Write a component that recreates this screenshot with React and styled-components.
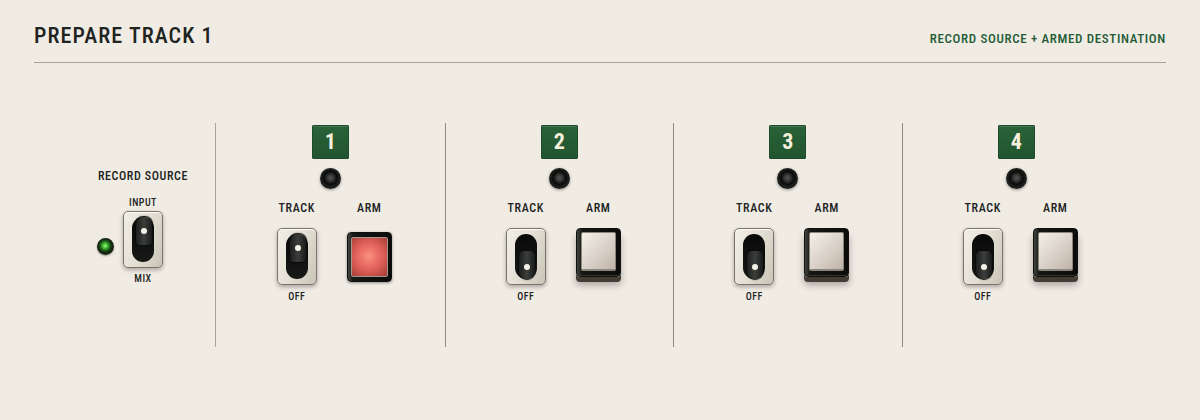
import React from "react";
import styled, { createGlobalStyle, css } from "styled-components";

const GlobalStyle = createGlobalStyle`
  * { box-sizing: border-box; }
  body {
    margin: 0;
    background: #f0ebe3;
    color: #20231f;
    font-family: "Roboto Condensed", "Liberation Sans Narrow", "Roboto", sans-serif;
    font-weight: 500;
  }
`;

const Page = styled.main`
  padding: 18px 34px 0;
`;

const Header = styled.header`
  display: flex;
  justify-content: space-between;
  align-items: flex-end;
  height: 45px;
  padding-bottom: 11px;
  border-bottom: 1px solid #aaa394;
`;

const Title = styled.h1`
  margin: 0;
  font-size: 22px;
  line-height: 30px;
  font-weight: 500;
  letter-spacing: 0.05em;
`;

const Subtitle = styled.p`
  margin: 0;
  color: #235b36;
  font-size: 13px;
  line-height: 24px;
  font-weight: 500;
  letter-spacing: 0.05em;
`;

const Deck = styled.div`
  display: grid;
  grid-template-columns: 147px repeat(4, 1fr);
  min-height: 224px;
  margin: 60px 36px 0 35px;
`;

const Source = styled.section`
  display: flex;
  flex-direction: column;
  align-items: center;
  padding: 45px 0 0 2px;
  border-right: 1px solid #aaa394;
`;

const Label = styled.span`
  font-size: 12px;
  line-height: 16px;
  letter-spacing: 0.05em;
  white-space: nowrap;
`;

const Small = styled.span`
  font-size: 10px;
  line-height: 12px;
  letter-spacing: 0.05em;
  white-space: nowrap;
`;

const SourceBody = styled.div`
  display: grid;
  grid-template-columns: 17px 40px 17px;
  column-gap: 9px;
  align-items: center;
  justify-items: center;
  margin-top: 13px;

  ${Small} { grid-column: 2; }
  ${Small}:first-child { margin-bottom: 2px; }
  ${Small}:last-child { margin-top: 5px; }
`;

const SourceLed = styled.span`
  grid-column: 1;
  width: 17px;
  height: 17px;
  margin-top: 14px;
  border-radius: 50%;
  background: radial-gradient(circle at 48% 46%, #a8f48c 0, #4fc93c 16%, #2c9425 28%, #1a5219 40%, #14260f 54%, #0f140d 100%);
  box-shadow: 0 1px 2px rgba(0, 0, 0, 0.35);
`;

const Switch = styled.button`
  display: flex;
  justify-content: center;
  width: 40px;
  height: 57px;
  padding: 5px 0;
  border: 1px solid #79746a;
  border-radius: 5px;
  background: linear-gradient(110deg, #f2efe7, #e3dfd4 50%, #c9c4b7);
  box-shadow: inset 0 1px 0 #fffdf7, 0 2px 4px rgba(0, 0, 0, 0.3);
`;

const Slot = styled.span`
  display: flex;
  flex-direction: column;
  justify-content: ${(p) => (p.$on ? "flex-start" : "flex-end")};
  width: 22px;
  height: 45px;
  border-radius: 11px;
  background: linear-gradient(#080908, #171917);
`;

const Lever = styled.span`
  display: flex;
  align-items: center;
  justify-content: center;
  width: 16px;
  height: 28px;
  margin-left: 4px;
  padding-top: ${(p) => (p.$on ? "0" : "4px")};
  border-radius: ${(p) => (p.$on ? "7px 7px 4px 4px" : "5px 5px 8px 8px")};
  background: linear-gradient(90deg, #1b1e1c, #3b3e3b 50%, #181b19);
  box-shadow: 0 0 1px 1px #0a0b0a;

  &::after {
    content: "";
    width: 6px;
    height: 6px;
    border-radius: 50%;
    background: #f5f2e9;
  }
`;

const Channel = styled.section`
  display: flex;
  flex-direction: column;
  align-items: center;
  padding-top: 2px;

  & + & { border-left: 1px solid #8e8a80; }
`;

const Badge = styled.h2`
  width: 37px;
  height: 34px;
  margin: 0;
  border: 1px solid #1d4b2b;
  border-radius: 1px;
  background: linear-gradient(#2a6238, #21552f);
  box-shadow: inset 0 1px 0 #46754f;
  color: #f5efdc;
  font-size: 22px;
  line-height: 31px;
  font-weight: 700;
  text-align: center;
`;

const Jack = styled.span`
  width: 21px;
  height: 21px;
  margin-top: 9px;
  border-radius: 50%;
  background: radial-gradient(circle at 50% 47%, #555 0, #303230 24%, #090a09 42%, #1d1f1d 58%, #0b0c0b 100%);
  box-shadow: 0 1px 3px rgba(0, 0, 0, 0.4);
`;

const Controls = styled.div`
  display: grid;
  grid-template-columns: 56px 45px;
  column-gap: 22px;
  justify-items: center;
  margin-top: 11px;
`;

const Control = styled.div`
  display: flex;
  flex-direction: column;
  align-items: center;

  button { margin-top: 12px; }
  ${Small} { margin-top: 6px; }
`;

const ArmButton = styled.button`
  width: 45px;
  height: 49px;
  padding: 3px 4px 5px;
  border: 1px solid #10110f;
  border-radius: 4px;
  background: linear-gradient(90deg, #444642, #151714 12%, #0b0c0a);
  box-shadow: inset 1px 0 0 #3f413d, inset 0 -1px 0 #33342f, 0 5px 0 #433d36, 0 8px 7px rgba(0, 0, 0, 0.3);

  ${(p) => p.$armed && css`
    && { margin-top: 16px; }
    height: 50px;
    padding: 4px 3px;
    box-shadow: inset 1px 0 0 #3f413d, 0 1px 3px rgba(0, 0, 0, 0.4);
  `}
`;

const Cap = styled.span`
  display: block;
  height: 100%;
  border: 1px solid #8b857c;
  border-bottom-width: 2px;
  border-radius: 2px;
  background: linear-gradient(135deg, #f4f0e8, #d9d1c8 55%, #bfb3a8);

  ${(p) => p.$armed && css`
    border: 1px solid #a7968c;
    background: radial-gradient(circle at 48% 48%, #fa9182 0, #ee746a 28%, #d85c54 58%, #a03a35 100%);
  `}
`;

function Toggle({ on, label }) {
  return (
    <Switch type="button" role="switch" aria-checked={on} aria-label={label}>
      <Slot $on={on}><Lever $on={on} /></Slot>
    </Switch>
  );
}

export default function App() {
  return (
    <>
      <GlobalStyle />
      <Page>
        <Header>
          <Title>PREPARE TRACK 1</Title>
          <Subtitle>RECORD SOURCE + ARMED DESTINATION</Subtitle>
        </Header>
        <Deck>
          <Source>
            <Label>RECORD SOURCE</Label>
            <SourceBody>
              <Small>INPUT</Small>
              <SourceLed />
              <Toggle on label="Record source" />
              <Small>MIX</Small>
            </SourceBody>
          </Source>
          {[1, 2, 3, 4].map((n) => (
            <Channel key={n}>
              <Badge>{n}</Badge>
              <Jack />
              <Controls>
                <Control>
                  <Label>TRACK</Label>
                  <Toggle on={n === 1} label={`Track ${n}`} />
                  <Small>OFF</Small>
                </Control>
                <Control>
                  <Label>ARM</Label>
                  <ArmButton type="button" aria-pressed={n === 1} aria-label={`Arm track ${n}`} $armed={n === 1}>
                    <Cap $armed={n === 1} />
                  </ArmButton>
                </Control>
              </Controls>
            </Channel>
          ))}
        </Deck>
      </Page>
    </>
  );
}
